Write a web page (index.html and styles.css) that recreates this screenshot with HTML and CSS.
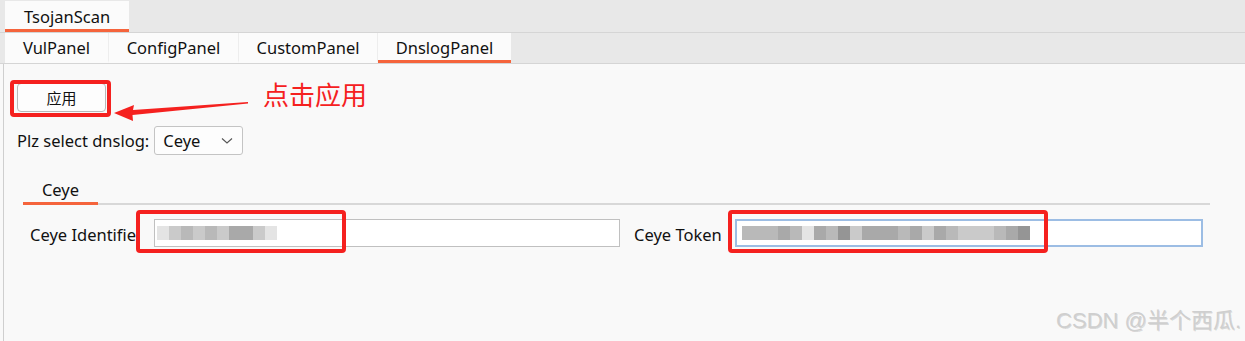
FILE: index.html
```html
<!DOCTYPE html>
<html lang="zh-CN">

<head>
  <meta charset="UTF-8">
  <title>TsojanScan</title>
  <link rel="stylesheet" href="styles.css">
</head>

<body>
  <header class="top-tabs">
    <div class="tab active">TsojanScan</div>
  </header>

  <nav class="sub-tabs">
    <div class="tab w1">VulPanel</div>
    <div class="tab w2">ConfigPanel</div>
    <div class="tab w3">CustomPanel</div>
    <div class="tab w4 active">DnslogPanel</div>
  </nav>

  <main class="content">
    <div class="apply-row">
      <button class="apply-btn">应用</button>
      <div class="mark mark-apply"></div>
      <svg class="arrow" width="140" height="24" viewBox="0 0 140 24">
        <path d="M134 1 L19 9 L20 4 L0 12 L19 20 L18.5 14 L134 2.5 Z" fill="#f5211f" />
      </svg>
      <span class="note">点击应用</span>
    </div>

    <div class="select-row">
      <label>Plz select dnslog:</label>
      <div class="select">
        <span>Ceye</span>
        <svg width="12" height="8" viewBox="0 0 12 8">
          <path d="M1 1.5 L6 6 L11 1.5" fill="none" stroke="#555" stroke-width="1.1" />
        </svg>
      </div>
    </div>

    <div class="inner-tabs">
      <div class="tab active">Ceye</div>
    </div>

    <div class="fields">
      <label class="field-label">Ceye Identifie</label>
      <div class="input first">
        <div class="blur">
          <i class="b4"></i><i class="b3"></i><i class="b2"></i><i class="b3"></i><i class="b2"></i><i class="b3"></i><i class="b1"></i><i class="b1"></i><i class="b3"></i><i class="b4"></i>
        </div>
      </div>
      <div class="mark mark-id"></div>

      <label class="field-label token">Ceye Token</label>
      <div class="input second">
        <div class="blur wide">
          <i class="b2"></i><i class="b2"></i><i class="b2"></i><i class="b1"></i><i class="b2"></i><i class="b4"></i><i class="b1"></i><i class="b2"></i><i class="b0"></i><i class="b3"></i><i class="b1"></i><i class="b1"></i><i class="b1"></i><i class="b2"></i><i class="b1"></i><i class="b3"></i><i class="b1"></i><i class="b2"></i><i class="b3"></i><i class="b3"></i><i class="b3"></i><i class="b2"></i><i class="b1"></i><i class="b0"></i>
        </div>
      </div>
      <div class="mark mark-token"></div>
    </div>

    <div class="watermark">CSDN @半个西瓜.</div>
  </main>
</body>

</html>
```

FILE: styles.css
```css
* {
  box-sizing: border-box;
}

body {
  margin: 0;
  background-color: #f9f9f9;
  font-family: "Noto Sans", "Noto Sans CJK SC", sans-serif;
  font-size: 16.5px;
  color: #111;
}

.top-tabs {
  height: 33px;
  padding: 1px 0 0 5px;
  background-color: #e8e8e8;
  border-bottom: 1px solid #d5d5d5;
  display: flex;
}

.tab {
  display: flex;
  align-items: center;
  justify-content: center;
  background-color: #fbfbfb;
  border-bottom: 3px solid transparent;
}

.tab.active {
  border-bottom-color: #f5643c;
}

.top-tabs .tab {
  width: 124px;
  height: 31px;
  padding-top: 2px;
}

.sub-tabs {
  height: 31px;
  padding: 0 0 0 5px;
  background-color: #e8e8e8;
  border-bottom: 1px solid #d5d5d5;
  display: flex;
}

.sub-tabs .tab {
  height: 30px;
  padding-top: 2px;
  border-right: 1px solid #ededed;
}

.sub-tabs .w1 {
  width: 104px;
}

.sub-tabs .w2 {
  width: 130px;
}

.sub-tabs .w3 {
  width: 139px;
}

.sub-tabs .w4 {
  width: 133px;
  border-right: none;
}

.content {
  position: relative;
  margin-left: 3px;
  height: 277px;
  border-left: 1px solid #cfcfcf;
  padding: 19px 0 0 13px;
}

.apply-row {
  position: relative;
  height: 29px;
}

.apply-btn {
  width: 89px;
  height: 29px;
  background-color: #fdfdfd;
  border: 1px solid #b8b8b8;
  border-radius: 4px;
  font-family: inherit;
  font-size: 15px;
  color: #111;
  padding: 0;
}

.mark {
  position: absolute;
  border: 4px solid #f5211f;
  border-radius: 4px;
}

.mark-apply {
  left: -7px;
  top: -3px;
  width: 101px;
  height: 37px;
}

.arrow {
  position: absolute;
  left: 97px;
  top: 18px;
}

.note {
  position: absolute;
  left: 246px;
  top: -8px;
  font-size: 26px;
  color: #f5211f;
  font-family: "Noto Sans CJK SC", sans-serif;
}

.select-row {
  margin-top: 14px;
  display: flex;
  align-items: center;
  gap: 5px;
}

.select {
  width: 89px;
  height: 29px;
  border: 1px solid #c4c4c4;
  border-radius: 3px;
  background-color: #fdfdfd;
  display: flex;
  align-items: center;
  justify-content: space-between;
  padding: 0 9px 0 8px;
}

.inner-tabs {
  margin: 22px 0 0 6px;
  width: 1187px;
  border-bottom: 2px solid #d8d8d8;
  display: flex;
}

.inner-tabs .tab {
  width: 75px;
  height: 28px;
  background: none;
  margin-bottom: -2px;
}

.fields {
  position: relative;
  margin-top: 14px;
  display: flex;
  align-items: center;
  height: 28px;
}

.field-label {
  margin-left: 13px;
  width: 124px;
  padding-top: 2px;
  white-space: nowrap;
  overflow: hidden;
}

.field-label.token {
  margin-left: 14px;
  width: 101px;
}

.input {
  width: 466px;
  height: 28px;
  background-color: #fff;
  border: 1px solid #c0c0c0;
  display: flex;
  align-items: center;
}

.input.second {
  width: 468px;
  border: 2px solid #9cbde4;
}

.blur {
  display: flex;
  margin-left: 2px;
}

.blur.wide {
  margin-left: 5px;
}

.blur i {
  display: block;
  width: 12px;
  height: 14px;
}

.b0 { background-color: #959595; }
.b1 { background-color: #a9a9a9; }
.b2 { background-color: #b9b9b9; }
.b3 { background-color: #cacaca; }
.b4 { background-color: #e4e4e4; }

.mark-id {
  left: 119px;
  top: -9px;
  width: 210px;
  height: 43px;
}

.mark-token {
  left: 711px;
  top: -9px;
  width: 320px;
  height: 43px;
}

.watermark {
  position: absolute;
  right: 4px;
  bottom: 7px;
  font-size: 22px;
  color: #cfcfcf;
  font-family: "Liberation Sans", "Noto Sans CJK SC", sans-serif;
  text-shadow: 1px 1px 0 rgba(0, 0, 0, 0.12);
}
```
